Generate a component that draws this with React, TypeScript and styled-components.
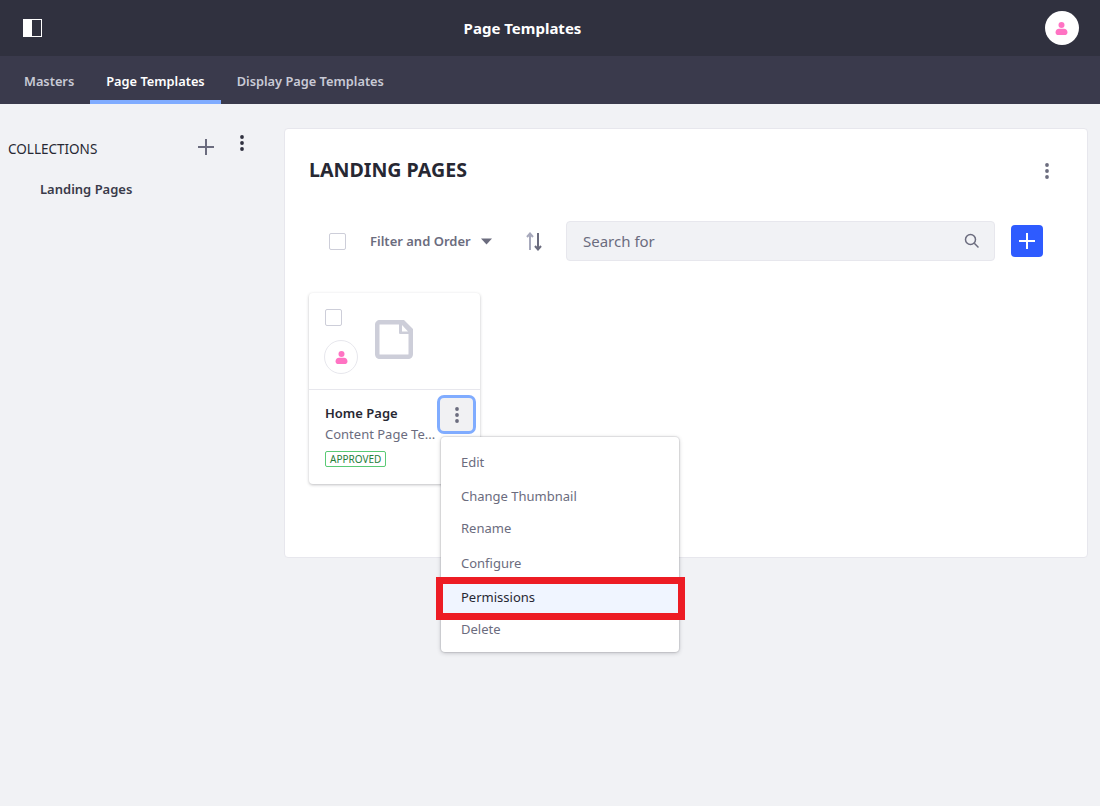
import { FC } from "react";
import styled, { createGlobalStyle } from "styled-components";

const GlobalStyle = createGlobalStyle`
  html, body {
    margin: 0;
    padding: 0;
    background: #f1f2f5;
    font-family: "Noto Sans", "Open Sans", sans-serif;
  }
  * {
    box-sizing: border-box;
  }
`;

const Page = styled.div`
  width: 1100px;
  height: 806px;
  overflow: hidden;
  background: #f1f2f5;
`;
const TopBar = styled.header`
  height: 56px;
  background: #30313f;
  display: flex;
  align-items: center;
  justify-content: space-between;
  padding: 0 21px 0 23px;
`;
const TopTitle = styled.h1`
  margin: 0 42px 0 0;
  color: #fff;
  font-size: 15px;
  font-weight: 700;
`;
const Tabs = styled.nav`
  height: 48px;
  background: #3a3a4c;
  display: flex;
  padding-left: 8px;
`;
const Tab = styled.a<{ $active?: boolean }>`
  display: flex;
  align-items: center;
  padding: 6px 16px 0;
  font-size: 12.8px;
  font-weight: 600;
  color: ${(p) => (p.$active ? "#fff" : "#c9cad6")};
  border-bottom: 4px solid ${(p) => (p.$active ? "#80acff" : "transparent")};
`;
const Body = styled.div`
  display: flex;
  padding: 24px 12px 0 8px;
`;
const Sidebar = styled.aside`
  width: 276px;
  flex: none;
`;
const SideHeader = styled.div`
  display: flex;
  align-items: center;
  height: 34px;
  color: #272833;
`;
const SideLabel = styled.span`
  font-size: 13.5px;
  width: 189px;
  padding-top: 8px;
`;
const SidePlus = styled.span`
  display: flex;
  width: 18px;
  padding-top: 4px;
`;
const SideKebab = styled.span`
  display: flex;
  margin-left: 25px;
  margin-top: -4px;
`;
const SideLink = styled.div`
  margin: 18px 0 0 32px;
  font-size: 13px;
  font-weight: 600;
  color: #3a3b4a;
`;
const Panel = styled.section`
  flex: 1;
  height: 430px;
  background: #fff;
  border: 1px solid #e7e7ed;
  border-radius: 4px;
  padding: 24px 24px 0;
`;
const PanelHeader = styled.div`
  display: flex;
  align-items: center;
  justify-content: space-between;
  height: 36px;
  padding-right: 14px;
`;
const PanelTitle = styled.h2`
  margin: 0 0 4px;
  font-size: 19.6px;
  font-weight: 700;
  color: #272833;
`;
const Toolbar = styled.div`
  display: flex;
  align-items: center;
  height: 40px;
  margin-top: 32px;
  padding-left: 20px;
`;
const CheckBox = styled.span`
  display: block;
  flex: none;
  width: 17px;
  height: 17px;
  background: #fff;
  border: 1px solid #cdced9;
  border-radius: 2px;
`;
const FilterButton = styled.div`
  display: flex;
  align-items: center;
  margin-left: 24px;
  width: 156px;
  font-size: 13px;
  font-weight: 600;
  color: #6b6c7e;
  gap: 10px;
`;
const SearchSpacer = styled.span`
  width: 24px;
  flex: none;
`;
const SearchBox = styled.div`
  width: 429px;
  height: 40px;
  display: flex;
  align-items: center;
  justify-content: space-between;
  padding: 0 14px 0 16px;
  background: #f1f2f5;
  border: 1px solid #e7e7ed;
  border-radius: 4px;
  font-size: 15px;
  color: #6b6c7e;
`;
const AddButton = styled.button`
  width: 32px;
  height: 32px;
  margin-left: 16px;
  padding: 0;
  border: none;
  border-radius: 4px;
  background: #2e5bff;
  display: flex;
  align-items: center;
  justify-content: center;
`;
const Card = styled.article`
  position: relative;
  width: 171px;
  height: 191px;
  margin-top: 32px;
  background: #fff;
  border-radius: 4px;
  box-shadow: 0 1px 3px rgba(39, 40, 51, 0.3);
`;
const CardTop = styled.div`
  height: 97px;
  border-bottom: 1px solid #e7e7ed;
  display: flex;
  padding: 16px 0 0 15px;
  gap: 17px;
`;
const CardLeft = styled.div`
  display: flex;
  flex-direction: column;
  gap: 14px;
`;
const CardCheck = styled(CheckBox)`
  margin-left: 1px;
`;
const SmallAvatar = styled.span`
  width: 34px;
  height: 34px;
  border-radius: 50%;
  border: 1px solid #e7e7ed;
  display: flex;
  align-items: center;
  justify-content: center;
`;
const DocSlot = styled.div`
  padding-top: 11px;
`;
const CardBottom = styled.div`
  padding: 14px 0 0 16px;
`;
const CardName = styled.div`
  font-size: 13px;
  font-weight: 600;
  color: #272833;
  line-height: 19px;
`;
const CardType = styled.div`
  font-size: 13px;
  color: #6b6c7e;
  line-height: 19px;
  margin-top: 2px;
`;
const Badge = styled.span`
  display: inline-block;
  margin-top: 7px;
  padding: 0 4px;
  height: 16px;
  line-height: 14px;
  font-size: 10px;
  color: #287d3c;
  border: 1px solid #5aca75;
  border-radius: 2px;
`;
const KebabButton = styled.button`
  position: absolute;
  left: 128px;
  top: 102px;
  width: 39px;
  height: 39px;
  padding: 0;
  background: #f1f1f3;
  border: 3px solid #80acff;
  border-radius: 7px;
  display: flex;
  align-items: center;
  justify-content: center;
`;
const Menu = styled.ul`
  position: absolute;
  left: 132px;
  top: 144px;
  width: 238px;
  height: 215px;
  margin: 0;
  padding: 7px 0;
  list-style: none;
  background: #fff;
  border-radius: 4px;
  box-shadow: 0 0 1px 1px rgba(39, 40, 51, 0.1), 0 1px 4px rgba(39, 40, 51, 0.25);
`;
const MenuItem = styled.li<{ $h: number; $top: number; $active?: boolean }>`
  position: relative;
  height: ${(p) => p.$h}px;
  display: flex;
  align-items: center;
  padding: ${(p) => p.$top}px 0 0 20px;
  font-size: 13px;
  color: ${(p) => (p.$active ? "#272833" : "#6b6c7e")};
  background: ${(p) => (p.$active ? "#f0f5ff" : "transparent")};
`;
const Highlight = styled.span`
  position: absolute;
  left: -5px;
  right: -6px;
  top: -3px;
  bottom: -7px;
  border: 7px solid #ed1c24;
`;
const AvatarCircle = styled.span`
  width: 34px;
  height: 34px;
  border-radius: 50%;
  background: #fff;
  display: flex;
  align-items: center;
  justify-content: center;
`;

const Kebab: FC<{ color: string }> = ({ color }) => (
  <svg width="4" height="16" viewBox="0 0 4 16" fill={color}>
    <circle cx="2" cy="2" r="1.9" />
    <circle cx="2" cy="8" r="1.9" />
    <circle cx="2" cy="14" r="1.9" />
  </svg>
);

const UserIcon: FC<{ size: number }> = ({ size }) => (
  <svg width={size} height={size} viewBox="0 0 12 13" fill="#ff73c3">
    <circle cx="6" cy="3" r="3" />
    <path d="M3.5 6.8h5C10.5 6.8 12 8.4 12 10.4c0 1.6-1.4 2.6-3 2.6H3c-1.6 0-3-1-3-2.6 0-2 1.500-3.600 3.500-3.600z" />
  </svg>
);

const menuItems = [
  { label: "Edit", h: 35, top: 0 },
  { label: "Change Thumbnail", h: 33, top: 0 },
  { label: "Rename", h: 32, top: 0 },
  { label: "Configure", h: 36, top: 2 },
  { label: "Permissions", h: 33, top: 0, active: true },
  { label: "Delete", h: 32, top: 0 },
];

export default function App() {
  return (
    <Page>
      <GlobalStyle />
      <TopBar>
        <svg width="19" height="18" viewBox="0 0 19 18">
          <rect x="0.5" y="0.5" width="18" height="17" fill="none" stroke="#fff" />
          <rect x="0" y="0" width="9" height="18" fill="#fff" />
        </svg>
        <TopTitle>Page Templates</TopTitle>
        <AvatarCircle>
          <UserIcon size={13} />
        </AvatarCircle>
      </TopBar>
      <Tabs>
        <Tab>Masters</Tab>
        <Tab $active>Page Templates</Tab>
        <Tab>Display Page Templates</Tab>
      </Tabs>
      <Body>
        <Sidebar>
          <SideHeader>
            <SideLabel>COLLECTIONS</SideLabel>
            <SidePlus>
              <svg width="18" height="18" viewBox="0 0 18 18" stroke="#6b6c7e" strokeWidth="2">
                <path d="M9 1v16M1 9h16" />
              </svg>
            </SidePlus>
            <SideKebab>
              <Kebab color="#30313f" />
            </SideKebab>
          </SideHeader>
          <SideLink>Landing Pages</SideLink>
        </Sidebar>
        <Panel>
          <PanelHeader>
            <PanelTitle>LANDING PAGES</PanelTitle>
            <Kebab color="#6b6c7e" />
          </PanelHeader>
          <Toolbar>
            <CheckBox />
            <FilterButton>
              Filter and Order
              <svg width="11" height="7" viewBox="0 0 11 7" fill="#6b6c7e">
                <path d="M0 0.500h11L5.500 6.500z" />
              </svg>
            </FilterButton>
            <svg width="16" height="19" viewBox="0 0 16 19" fill="none" strokeWidth="2">
              <path d="M4 18V2M1 5l3-3.500L7 5" stroke="#a7a9bc" />
              <path d="M12 1v16M9 14l3 3.500 3-3.500" stroke="#6b6c7e" />
            </svg>
            <SearchSpacer />
            <SearchBox>
              Search for
              <svg width="16" height="16" viewBox="0 0 16 16" fill="none" stroke="#6b6c7e" strokeWidth="1.500">
                <circle cx="6.500" cy="6.500" r="5" />
                <path d="M10.300 10.300L14.500 14.500" />
              </svg>
            </SearchBox>
            <AddButton>
              <svg width="16" height="16" viewBox="0 0 16 16" stroke="#fff" strokeWidth="2">
                <path d="M8 0v16M0 8h16" />
              </svg>
            </AddButton>
          </Toolbar>
          <Card>
            <CardTop>
              <CardLeft>
                <CardCheck />
                <SmallAvatar>
                  <UserIcon size={13} />
                </SmallAvatar>
              </CardLeft>
              <DocSlot>
                <svg width="38" height="39" viewBox="0 0 38 39">
                  <path
                    fillRule="evenodd"
                    fill="#cdced9"
                    d="M5 0h24l9 9v25c0 3-2 5-5 5H5c-3 0-5-2-5-5V5c0-3 2-5 5-5zM5 4.500c-.4 0-.5.100-.5.500v29c0 .4.100.5.500.5h28c.4 0 .5-.1.500-.5V14H25.500c-1 0-1.500-.5-1.500-1.500V4.500z"
                  />
                  <path fill="#fff" d="M27 5l6 6.500h-6z" />
                </svg>
              </DocSlot>
            </CardTop>
            <CardBottom>
              <CardName>Home Page</CardName>
              <CardType>Content Page Te...</CardType>
              <Badge>APPROVED</Badge>
            </CardBottom>
            <KebabButton>
              <Kebab color="#6b6c7e" />
            </KebabButton>
            <Menu>
              {menuItems.map((item) => (
                <MenuItem key={item.label} $h={item.h} $top={item.top} $active={item.active}>
                  {item.label}
                  {item.active && <Highlight />}
                </MenuItem>
              ))}
            </Menu>
          </Card>
        </Panel>
      </Body>
    </Page>
  );
}
